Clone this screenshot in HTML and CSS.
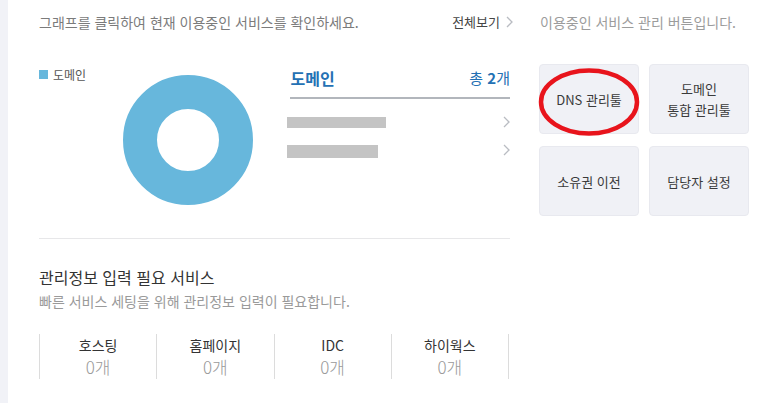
FILE: index.html
```html
<!DOCTYPE html>
<html lang="ko">
<head>
<meta charset="utf-8">
<title>서비스 현황</title>
<link rel="stylesheet" href="styles.css">
</head>
<body>
<div class="page">
  <div class="strip"></div>
  <div class="main">
    <section class="left">
      <div class="head">
        <p class="guide">그래프를 클릭하여 현재 이용중인 서비스를 확인하세요.</p>
        <a class="more" href="#">전체보기<svg class="chev" width="7" height="12" viewBox="0 0 7 12"><polyline points="1,1 6,6 1,11" fill="none" stroke="#b9bcc2" stroke-width="1.3"/></svg></a>
      </div>
      <div class="chart">
        <div class="chart-left">
          <div class="legend"><span class="swatch"></span>도메인</div>
          <svg class="donut" width="130" height="130" viewBox="0 0 130 130"><circle cx="65" cy="65" r="48" fill="none" stroke="#67b7dc" stroke-width="34"/></svg>
        </div>
        <div class="list">
          <div class="list-head"><strong>도메인</strong><span class="total">총 <b>2</b>개</span></div>
          <ul class="rows">
            <li class="row"><span class="mask mask-1"></span><svg class="chev" width="7" height="12" viewBox="0 0 7 12"><polyline points="1,1 6,6 1,11" fill="none" stroke="#b9bcc2" stroke-width="1.3"/></svg></li>
            <li class="row"><span class="mask mask-2"></span><svg class="chev" width="7" height="12" viewBox="0 0 7 12"><polyline points="1,1 6,6 1,11" fill="none" stroke="#b9bcc2" stroke-width="1.3"/></svg></li>
          </ul>
        </div>
      </div>
      <div class="need">
        <h3 class="need-title">관리정보 입력 필요 서비스</h3>
        <p class="need-sub">빠른 서비스 세팅을 위해 관리정보 입력이 필요합니다.</p>
        <div class="stats">
          <div class="stat"><span class="stat-label">호스팅</span><span class="stat-value">0개</span></div>
          <div class="stat"><span class="stat-label">홈페이지</span><span class="stat-value">0개</span></div>
          <div class="stat"><span class="stat-label">IDC</span><span class="stat-value">0개</span></div>
          <div class="stat"><span class="stat-label">하이웍스</span><span class="stat-value">0개</span></div>
        </div>
      </div>
    </section>
    <aside class="right">
      <p class="guide2">이용중인 서비스 관리 버튼입니다.</p>
      <div class="tools">
        <button class="tool tool-marked">DNS 관리툴<svg class="mark" width="104" height="70" viewBox="0 0 104 70"><ellipse cx="52" cy="35" rx="48" ry="31.5" fill="none" stroke="#e8141c" stroke-width="4.5"/></svg></button>
        <button class="tool">도메인<br>통합 관리툴</button>
        <button class="tool">소유권 이전</button>
        <button class="tool">담당자 설정</button>
      </div>
    </aside>
  </div>
</div>
</body>
</html>
```
FILE: styles.css
```css
* { box-sizing: border-box; }
html, body { margin: 0; padding: 0; background: #fff; }
body {
  font-family: "Noto Sans CJK KR", "Noto Sans", sans-serif;
  color: #333;
  width: 770px;
  height: 403px;
  overflow: hidden;
}
.page { display: flex; height: 403px; }
.strip { width: 8px; background: #f1f2f7; flex: none; }
.main { display: flex; gap: 29px; padding-left: 31px; }
.left { width: 471px; flex: none; }
.right { width: 210px; flex: none; }

.head {
  height: 42px;
  display: flex;
  justify-content: space-between;
  align-items: center;
  padding-top: 1px;
}
.guide { margin: 0; font-size: 14px; color: #7b7b7b; line-height: 20px; }
.more {
  display: flex; align-items: center; gap: 6px;
  font-size: 13px; color: #454545; text-decoration: none; line-height: 20px;
  margin-right: -3px;
}
.chev { display: block; flex: none; }

.chart {
  height: 197px;
  display: flex;
  border-bottom: 1px solid #e7e7e9;
}
.chart-left { display: flex; width: 252px; }
.legend {
  width: 84px; flex: none;
  display: flex; align-items: center; gap: 5px;
  margin-top: 24px; height: 16px;
  font-size: 12px; color: #555;
}
.swatch { width: 9px; height: 9px; background: #67b7dc; display: block; }
.donut { display: block; margin-top: 33px; }

.list { width: 220px; }
.list-head {
  margin-top: 26px;
  display: flex; justify-content: space-between; align-items: center;
  line-height: 20px; padding-bottom: 9px;
  border-bottom: 2px solid #b2b6bc;
  color: #2471b4;
}
.list-head strong { font-size: 16px; font-weight: 700; }
.total { font-size: 15px; }
.total b { font-weight: 700; }
.rows { list-style: none; margin: 0; padding: 9px 0 0; }
.row {
  height: 28px;
  display: flex; align-items: center; justify-content: space-between;
}
.mask { display: block; background: #c4c4c4; margin-left: -3px; }
.mask-1 { width: 99px; height: 11px; }
.mask-2 { width: 91px; height: 13px; margin-top: 2px; }

.need { padding-top: 27px; }
.need-title { margin: 0; font-size: 16px; font-weight: 400; line-height: 22px; color: #333; }
.need-sub { margin: 3px 0 0; font-size: 14px; line-height: 20px; color: #9a9a9a; }
.stats {
  margin-top: 23px;
  width: 470px;
  display: grid;
  grid-template-columns: repeat(4, 1fr);
  border-right: 1px solid #dcdcdc;
}
.stat {
  border-left: 1px solid #dcdcdc;
  height: 45px;
  display: flex; flex-direction: column; align-items: center;
}
.stat-label { font-size: 14px; line-height: 22px; color: #333; }
.stat-value { font-size: 17px; line-height: 22px; color: #9a9a9a; font-weight: 300; }

.guide2 { margin: 0; height: 42px; line-height: 44px; font-size: 14px; color: #9c9c9c; padding-left: 1px; }
.tools {
  margin-top: 22px;
  display: grid;
  grid-template-columns: 100px 100px;
  grid-auto-rows: 70px;
  gap: 12px 10px;
}
.tool {
  position: relative;
  font-family: inherit;
  font-size: 13px;
  line-height: 21px;
  color: #3a3a3a;
  background: #f0f1f6;
  border: 1px solid #e8e9ef;
  border-radius: 4px;
  padding: 0;
  display: flex; align-items: center; justify-content: center;
  text-align: center;
}
.mark { position: absolute; left: -3px; top: 2px; pointer-events: none; }
```
